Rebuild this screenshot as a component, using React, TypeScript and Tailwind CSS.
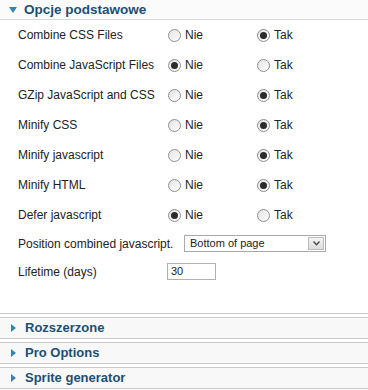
import React from 'react';

type Opt = { label: string; value: 'nie' | 'tak' };

const options: Opt[] = [
  { label: 'Combine CSS Files', value: 'tak' },
  { label: 'Combine JavaScript Files', value: 'nie' },
  { label: 'GZip JavaScript and CSS', value: 'tak' },
  { label: 'Minify CSS', value: 'tak' },
  { label: 'Minify javascript', value: 'tak' },
  { label: 'Minify HTML', value: 'tak' },
  { label: 'Defer javascript', value: 'nie' },
];

const collapsed = ['Rozszerzone', 'Pro Options', 'Sprite generator'];

function Radio({ checked, text }: { checked: boolean; text: string }) {
  return (
    <div className="flex items-center">
      <span className="w-[13px] h-[13px] rounded-full border border-[#8e8e8e] bg-gradient-to-br from-[#e2e2e2] to-white flex items-center justify-center">
        {checked && <span className="w-[7px] h-[7px] rounded-full bg-[#2b2b2b]" />}
      </span>
      <span className="ml-[4px] text-[12px] text-[#222]">{text}</span>
    </div>
  );
}

function Toggle({ open }: { open: boolean }) {
  return open ? (
    <svg width="8" height="6" viewBox="0 0 8 6" className="shrink-0">
      <path d="M0 0 L8 0 L4 6 Z" fill="#2f86b4" />
    </svg>
  ) : (
    <svg width="5" height="8" viewBox="0 0 5 8" className="shrink-0">
      <path d="M0 0 L5 4 L0 8 Z" fill="#2f86b4" />
    </svg>
  );
}

export default function App() {
  return (
    <div className="w-[368px] h-[390px] bg-white overflow-hidden font-['Liberation_Sans',Arial,sans-serif]">
      {/* Opcje podstawowe */}
      <div className="border-b border-[#c9c9c9]">
        <div className="h-[20px] flex items-center pl-[9px] border-b border-[#d8d8d8] bg-[#fbfbfb]">
          <Toggle open />
          <span className="ml-[7px] text-[13.5px] leading-none font-bold text-[#1d4f73]">Opcje podstawowe</span>
        </div>
        <div className="h-[293px] pl-[18px]">
          {options.map((o) => (
            <div key={o.label} className="h-[30px] flex items-center">
              <div className="w-[150px] text-[12px] text-[#222]">{o.label}</div>
              <div className="w-[89px]">
                <Radio checked={o.value === 'nie'} text="Nie" />
              </div>
              <Radio checked={o.value === 'tak'} text="Tak" />
            </div>
          ))}
          <div className="h-[27px] flex items-center">
            <div className="w-[166px] text-[12px] text-[#222]">Position combined javascript.</div>
            <div className="w-[142px] h-[17px] border border-[#a9a9a9] flex items-center justify-between">
              <span className="pl-[5px] text-[11px] text-[#222]">Bottom of page</span>
              <span className="w-[16px] h-[13px] mr-[1px] border border-[#bcbcbc] bg-gradient-to-b from-[#f4f4f4] to-[#dcdcdc] flex items-center justify-center">
                <svg width="7" height="5" viewBox="0 0 7 5">
                  <path d="M0.5 0.5 L3.5 3.8 L6.5 0.5" fill="none" stroke="#4a4a4a" strokeWidth="1.4" />
                </svg>
              </span>
            </div>
          </div>
          <div className="h-[29px] flex items-center">
            <div className="w-[149px] text-[12px] text-[#222]">Lifetime (days)</div>
            <div className="w-[49px] h-[17px] border border-[#b0b0b0] flex items-center pl-[3px] text-[11px] text-[#222]">30</div>
          </div>
        </div>
      </div>

      {/* collapsed panels */}
      <div className="mt-[3px] flex flex-col gap-[3px]">
        {collapsed.map((t) => (
          <div key={t} className="h-[22px] border-y border-[#c9c9c9] bg-[#f8f8f8] flex items-center pl-[11px]">
            <Toggle open={false} />
            <span className="ml-[9px] text-[13px] font-bold text-[#1d4f73]">{t}</span>
          </div>
        ))}
      </div>
    </div>
  );
}
